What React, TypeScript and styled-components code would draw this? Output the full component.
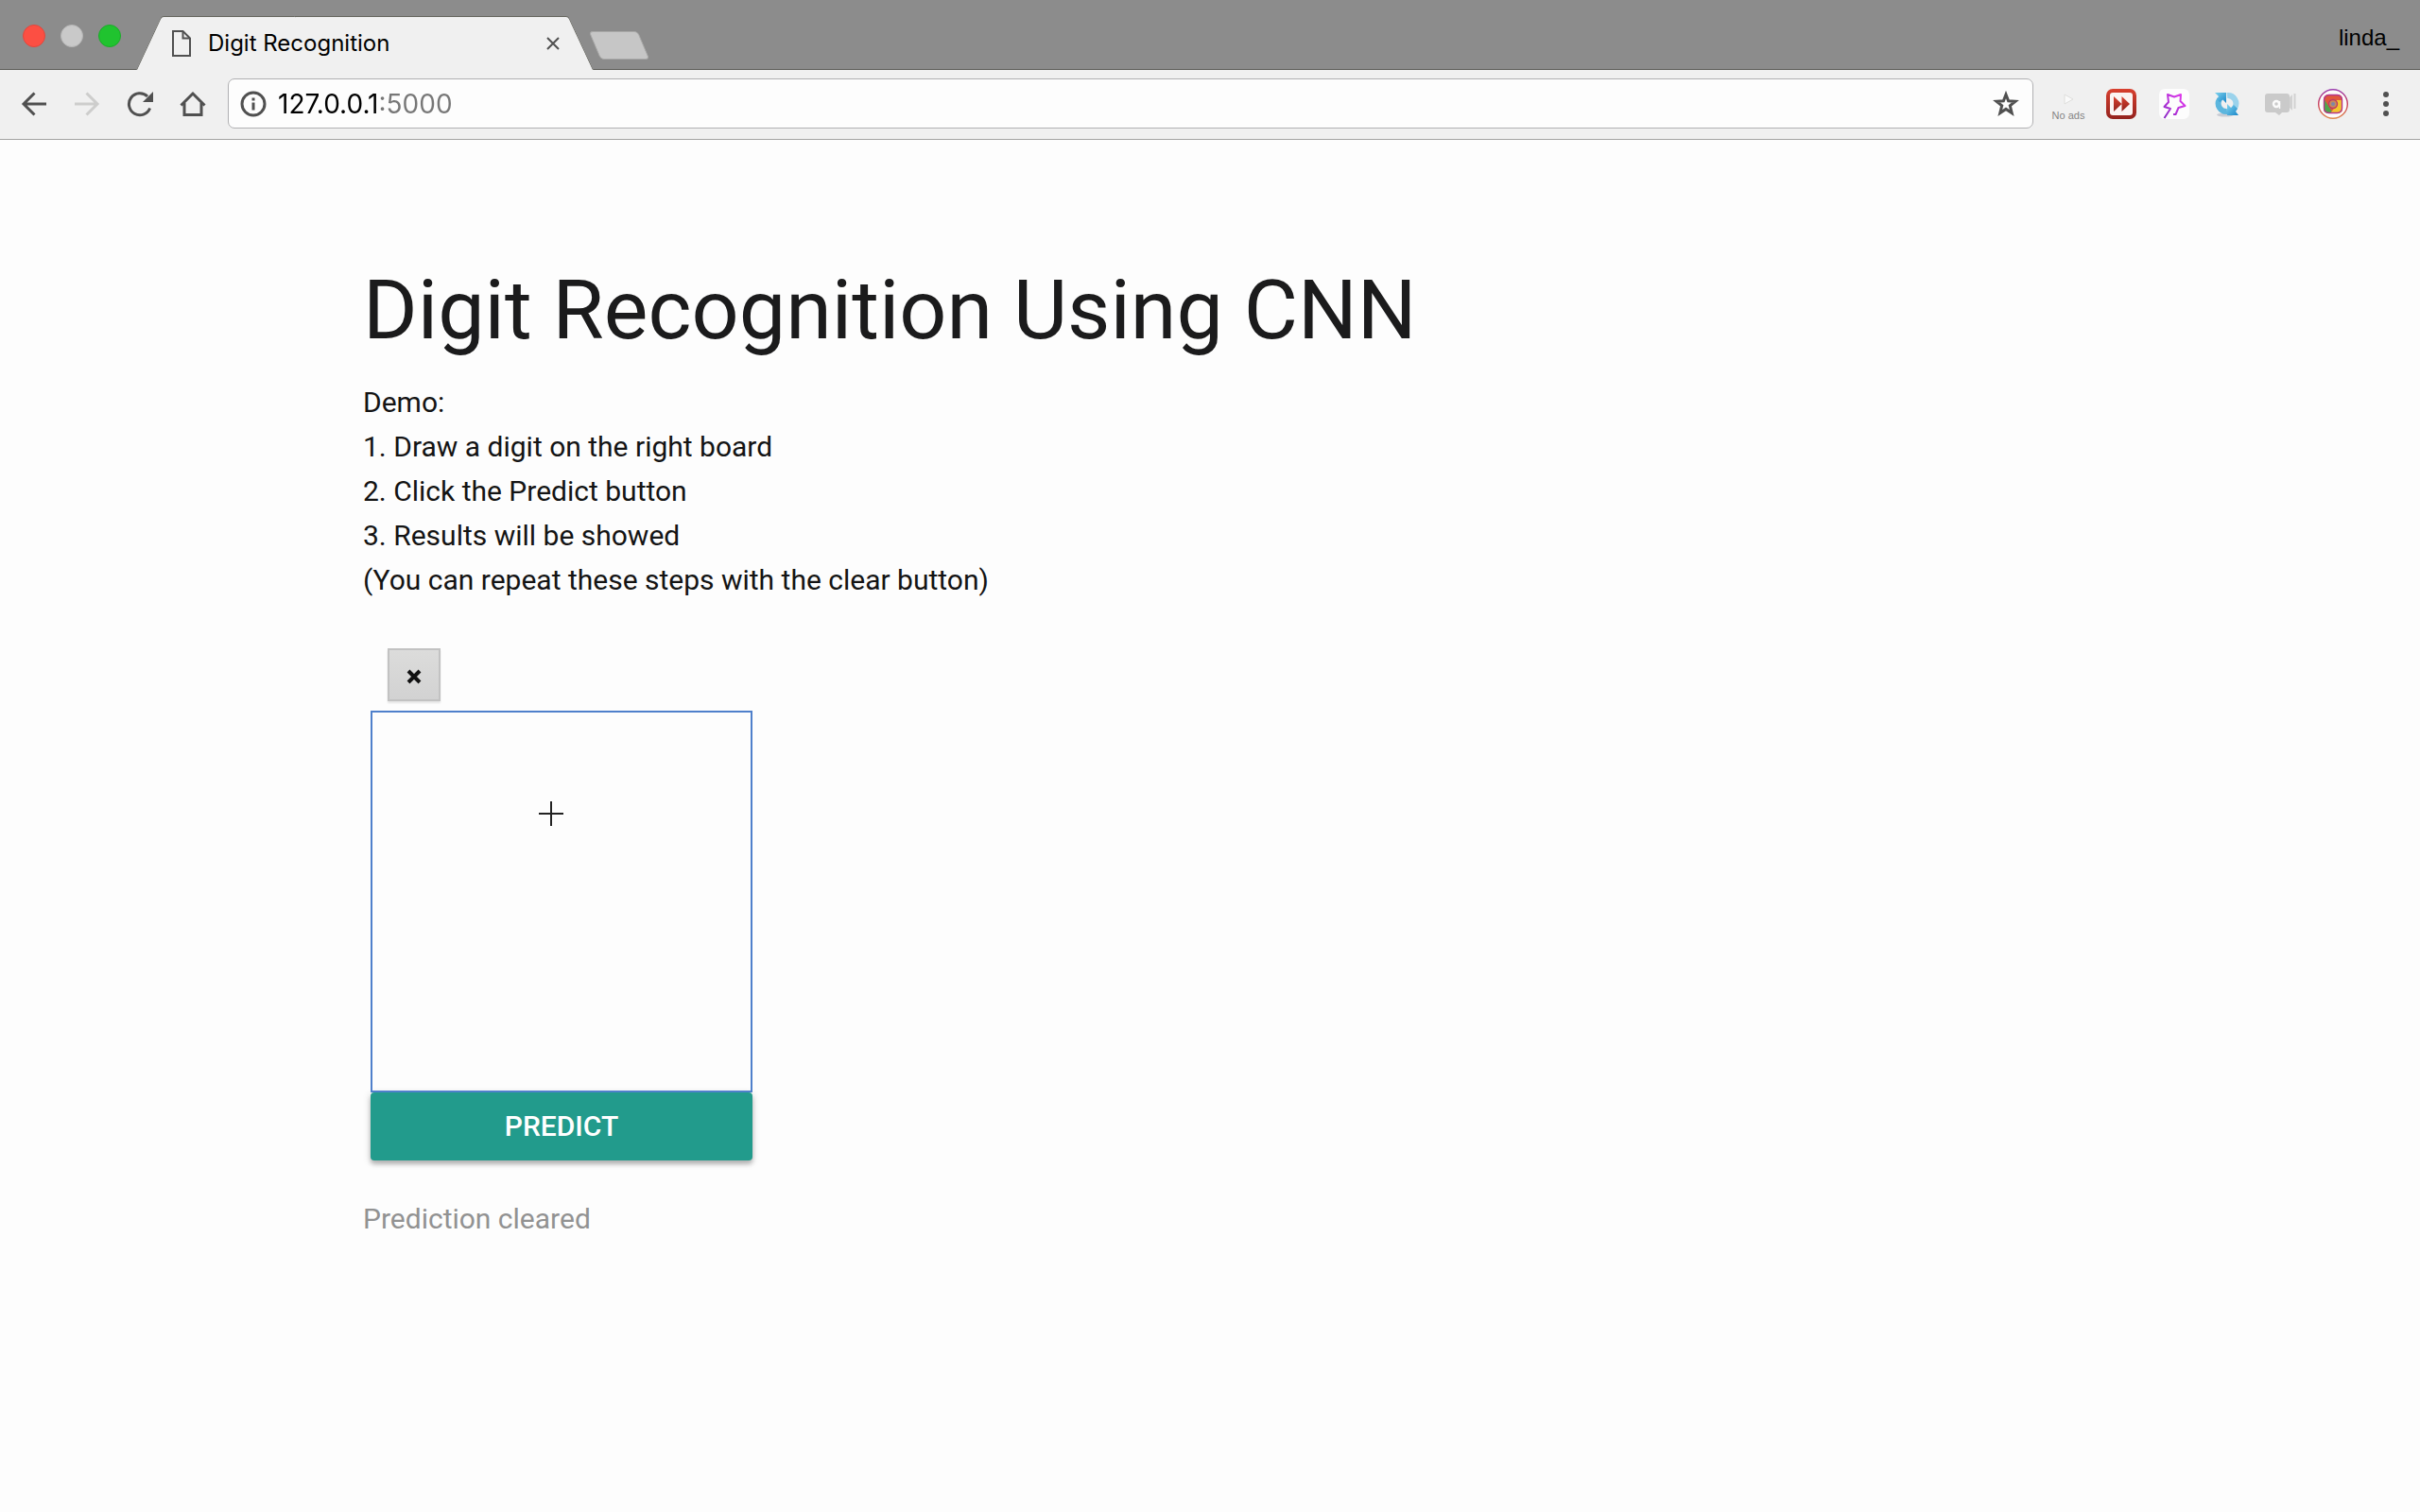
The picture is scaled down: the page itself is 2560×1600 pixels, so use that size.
import React, { useState } from "react";
import styled, { createGlobalStyle } from "styled-components";

const ui = `Inter, "Liberation Sans", sans-serif`;

const GlobalStyle = createGlobalStyle`
  * { box-sizing: border-box; }
  body {
    margin: 0;
    background: #fdfdfd;
    color: #1b1b1c;
    font-family: Roboto, "Liberation Sans", sans-serif;
  }
  button { font: inherit; color: inherit; cursor: pointer; }
`;

const Window = styled.div`
  display: flex;
  flex-direction: column;
  min-height: 100vh;
`;

const TabStrip = styled.header`
  display: flex;
  align-items: flex-start;
  height: 74px;
  padding: 0 22px 0 24px;
  background: #8c8c8c;
  box-shadow: inset 0 -1px #5c5c58;
`;

const Lights = styled.div`
  display: flex;
  gap: 16px;
  margin: 26px 16px 0 0;
`;

const Light = styled.button<{ $color: string; $edge: string }>`
  width: 24px;
  height: 24px;
  padding: 0;
  border: 1px solid ${(p) => p.$edge};
  border-radius: 50%;
  background: ${(p) => p.$color};
`;

const Tab = styled.div`
  position: relative;
  isolation: isolate;
  display: flex;
  align-items: center;
  width: 484px;
  height: 57px;
  margin-top: 17px;
  padding: 0 36px 0 38px;
  font: 24px/28px ${ui};
  color: #000;

  &::before,
  &::after {
    content: "";
    position: absolute;
    z-index: -1;
    inset: 0 40% 0 0;
    background: #f0f0f0;
    border: solid #66665f;
    border-width: 1px 0 0 1px;
    border-radius: 3px 0 0 0;
    transform: skewX(-25deg);
    transform-origin: bottom left;
  }
  &::after {
    inset: 0 0 0 40%;
    border-width: 1px 1px 0 0;
    border-radius: 0 3px 0 0;
    transform: skewX(25deg);
    transform-origin: bottom right;
  }
`;

const TabTitle = styled.span`
  flex: 1;
  margin-left: 18px;
  white-space: nowrap;
`;

const TabClose = styled.button`
  display: flex;
  padding: 0;
  border: 0;
  background: none;
`;

const NewTab = styled.button`
  width: 52px;
  height: 30px;
  margin: 33px 0 0 1px;
  padding: 0;
  border: 1px solid #a9a9a8;
  border-radius: 4px;
  background: #c6c6c6;
  transform: skewX(23deg);
`;

const Profile = styled.span`
  margin: 26px 0 0 auto;
  font: 24px/28px "Liberation Sans", sans-serif;
  color: #000;
`;

const Toolbar = styled.nav`
  display: flex;
  align-items: center;
  height: 74px;
  padding: 9px 8px 11px;
  background: #f0f0f0;
  border-bottom: 1px solid #a3a3a2;
`;

const ToolButton = styled.button`
  display: flex;
  align-items: center;
  justify-content: center;
  width: 56px;
  height: 53px;
  padding: 0;
  border: 0;
  background: none;
`;

const AddressBar = styled.label`
  display: flex;
  flex: 1;
  align-items: center;
  height: 53px;
  margin: 0 9px;
  padding: 0 14px 0 12px;
  background: #fdfdfd;
  border: 1px solid #b0b0b2;
  border-radius: 7px;
`;

/* The host is black and the port grey, split right before the colon. */
const AddressInput = styled.input`
  flex: 1;
  min-width: 0;
  height: 36px;
  margin-left: 12px;
  padding: 0;
  border: 0;
  outline: 0;
  font: 28px/36px ${ui};
  color: #000;
  background: linear-gradient(90deg, #000 108px, #777 108px);
  background-clip: text;
  -webkit-text-fill-color: transparent;
`;

const StarButton = styled.button`
  display: flex;
  padding: 0;
  border: 0;
  background: none;
`;

const NoAds = styled.span`
  display: flex;
  flex-direction: column;
  align-items: center;
  gap: 5px;
  padding-top: 8px;
  font: 11px/12px "Liberation Sans", sans-serif;
  color: #858585;
`;

const Page = styled.main`
  width: 70%;
  margin: 0 auto;
  padding-top: 132px;
`;

const Title = styled.h1`
  margin: 0 0 26px;
  font-size: 88px;
  font-weight: 400;
  line-height: 96px;
`;

const Steps = styled.p`
  margin: 0 0 49px;
  font-size: 30px;
  line-height: 47px;
  color: #141414;
`;

const Workspace = styled.section`
  width: 404px;
  margin-left: 8px;
`;

const ClearButton = styled.button`
  display: flex;
  align-items: center;
  justify-content: center;
  width: 56px;
  height: 56px;
  margin: 0 0 10px 18px;
  padding: 4px 0 0;
  border: 2px solid #c2c2c2;
  background: linear-gradient(#dcdcdb, #d2d2d2);
  box-shadow: 0 2px 2px rgba(0, 0, 0, 0.1);
`;

const Board = styled.div`
  position: relative;
  height: 404px;
  border: 2px solid #4f80cb;
  cursor: crosshair;
`;

const Crosshair = styled.svg`
  position: absolute;
  left: 176px;
  top: 94px;
`;

const PredictButton = styled.button`
  display: block;
  width: 100%;
  height: 72px;
  padding: 0;
  border: 0;
  border-radius: 4px;
  background: #229b8c;
  box-shadow: 0 4px 4px rgba(0, 0, 0, 0.2), 0 2px 8px rgba(0, 0, 0, 0.18);
  && { color: #fff; font-size: 30px; font-weight: 500; line-height: 72px; }
  text-transform: uppercase;
`;

const Status = styled.p`
  margin: 38px 0 0;
  font-size: 30px;
  line-height: 47px;
  color: #929292;
`;

const ink = "#505050";

const FileIcon = () => (
  <svg width="20" height="28" viewBox="0 0 20 28" fill="none" stroke={ink} strokeWidth="2">
    <path d="M1 1H11.5L19 8.5V27H1Z" />
    <path d="M11.5 1V8.5H19" />
  </svg>
);

const CloseIcon = () => (
  <svg width="14" height="14" viewBox="0 0 14 14" stroke={ink} strokeWidth="2">
    <path d="M1 1L13 13M13 1L1 13" />
  </svg>
);

const BackIcon = () => (
  <svg width="28" height="28" viewBox="0 0 28 28" fill="none" stroke={ink} strokeWidth="3">
    <path d="M27 14H3M14.5 2.5L3 14L14.5 25.5" />
  </svg>
);

const ForwardIcon = () => (
  <svg width="28" height="28" viewBox="0 0 28 28" fill="none" stroke="#cdcdcc" strokeWidth="3">
    <path d="M1 14H25M13.5 2.5L25 14L13.5 25.5" />
  </svg>
);

const ReloadIcon = () => (
  <svg width="28" height="28" viewBox="0 0 28 28">
    <path d="M24.6 18.5A11.5 11.5 0 1 1 22 6" fill="none" stroke={ink} strokeWidth="3" />
    <path d="M28 1V12H17Z" fill={ink} />
  </svg>
);

const HomeIcon = () => (
  <svg width="28" height="28" viewBox="0 0 28 28" fill="none" stroke={ink} strokeWidth="3">
    <path d="M1.5 15.5L14 3L26.5 15.5" />
    <path d="M5 13V25.5H23V13" />
  </svg>
);

const InfoIcon = () => (
  <svg width="28" height="28" viewBox="0 0 28 28">
    <circle cx="14" cy="14" r="12" fill="none" stroke={ink} strokeWidth="3" />
    <path d="M12.5 7.5h3v3h-3zM12.5 12.5h3v8h-3z" fill={ink} />
  </svg>
);

const StarIcon = () => (
  <svg width="28" height="28" viewBox="0 0 28 28" fill="none" stroke={ink} strokeWidth="3">
    <path d="M14 4L16.600 10.800L24 11.200L18.300 15.900L20.200 23.500L14 19.400L7.800 23.500L9.700 15.900L4 11.200L11.400 10.800Z" />
  </svg>
);

const PlayIcon = () => (
  <svg width="12" height="12" viewBox="0 0 12 12">
    <path d="M2 1L11 6L2 11Z" fill="#fafafa" stroke="#dededc" />
  </svg>
);

const SkipIcon = () => (
  <svg width="32" height="32" viewBox="0 0 32 32">
    <defs>
      <linearGradient id="skipRed" x1="0" y1="0" x2="0" y2="1">
        <stop offset="0" stopColor="#d8402f" />
        <stop offset="1" stopColor="#93221d" />
      </linearGradient>
    </defs>
    <rect width="32" height="32" rx="7" fill="url(#skipRed)" />
    <rect x="4" y="4" width="24" height="24" rx="3" fill="#fbf4f3" />
    <path d="M8 8L16.5 16L8 24ZM16.5 8L25 16L16.5 24Z" fill="url(#skipRed)" />
  </svg>
);

const WandIcon = () => (
  <svg width="32" height="32" viewBox="0 0 32 32">
    <defs>
      <linearGradient id="wandPink" x1="0" y1="1" x2="1" y2="0">
        <stop offset="0" stopColor="#8a2bc4" />
        <stop offset="1" stopColor="#e83bf0" />
      </linearGradient>
    </defs>
    <rect width="32" height="32" rx="6" fill="#fdfdfd" />
    <path
      d="M5.5 31L12 21L5.500 19L10 14L9 6L16 8.500L23 6L22.5 13L27.5 18L20.5 20L17.5 27H15"
      fill="none"
      stroke="url(#wandPink)"
      strokeWidth="2"
      strokeLinejoin="round"
    />
  </svg>
);

const SyncIcon = () => (
  <svg width="28" height="28" viewBox="0 0 28 28">
    <defs>
      <linearGradient id="syncBlue" x1="0" y1="0" x2="1" y2="1">
        <stop offset="0" stopColor="#7fd3ee" />
        <stop offset="1" stopColor="#1a87c9" />
      </linearGradient>
    </defs>
    <ellipse cx="12" cy="25.5" rx="9" ry="2" fill="#c9ccd4" />
    <path d="M14 22A8.500 8.500 0 0 1 6 9" fill="none" stroke="#5cb6de" strokeWidth="6" />
    <path d="M14 5A8.500 8.500 0 0 1 22 18" fill="none" stroke="#9bd3ec" strokeWidth="6" />
    <path d="M1 2H13V13L9.5 9.5L6 12L3 9L5 6Z" fill="url(#syncBlue)" />
    <path d="M26 26H14V14L18 18L21 15L25 19L23 22Z" fill="url(#syncBlue)" />
  </svg>
);

const CameraIcon = () => (
  <svg width="34" height="28" viewBox="0 0 34 28">
    <path d="M4 3H24Q27 3 27 6V20Q27 23 24 23H19L16 26L12 23H4Q1 23 1 20V6Q1 3 4 3Z" fill="#cacaca" />
    <path d="M27 7L30 4V21L27 18Z" fill="#d2d2d2" />
    <path d="M32.5 3V19" stroke="#d2d2d2" strokeWidth="2" />
    <circle cx="13" cy="14" r="3" fill="none" stroke="#fbfbfb" strokeWidth="2.4" />
    <path d="M16.5 11V19" stroke="#fbfbfb" strokeWidth="1.5" />
  </svg>
);

const InstaIcon = () => (
  <svg width="32" height="32" viewBox="0 0 32 32">
    <defs>
      <linearGradient id="ring" x1="0" y1="0" x2="0" y2="1">
        <stop offset="0" stopColor="#9a3cae" />
        <stop offset="0.5" stopColor="#c8405a" />
        <stop offset="1" stopColor="#e08a50" />
      </linearGradient>
      <clipPath id="tile">
        <rect x="6" y="6" width="20" height="20" rx="5" />
      </clipPath>
    </defs>
    <circle cx="16" cy="16" r="15.3" fill="#fdfbfa" stroke="url(#ring)" strokeWidth="1.4" />
    <g clipPath="url(#tile)">
      <rect x="6" y="6" width="20" height="20" fill="#e0583c" />
      <path d="M6 10L16 26H6Z" fill="#4fa64a" />
      <path d="M18 12H26V26H13L19 18Z" fill="#f4c62f" />
    </g>
    <rect x="6.5" y="6.5" width="19" height="19" rx="5" fill="none" stroke="#b4368c" strokeWidth="1.4" />
    <circle cx="16" cy="16" r="4.5" fill="#c98a5c" stroke="#c03a63" strokeWidth="1.4" />
    <circle cx="16" cy="16" r="2" fill="#7c86a8" />
  </svg>
);

const MenuIcon = () => (
  <svg width="8" height="28" viewBox="0 0 8 28" fill={ink}>
    <circle cx="4" cy="4" r="3" />
    <circle cx="4" cy="14" r="3" />
    <circle cx="4" cy="24" r="3" />
  </svg>
);

const ClearIcon = () => (
  <svg width="16" height="16" viewBox="0 0 16 16" stroke="#111" strokeWidth="4">
    <path d="M2 2L14 14M14 2L2 14" />
  </svg>
);

const navigation = [
  { label: "Back", Icon: BackIcon },
  { label: "Forward", Icon: ForwardIcon },
  { label: "Reload", Icon: ReloadIcon },
  { label: "Home", Icon: HomeIcon },
];

const extensions = [
  { label: "Skip", Icon: SkipIcon },
  { label: "Wand", Icon: WandIcon },
  { label: "Sync", Icon: SyncIcon },
  { label: "Camera", Icon: CameraIcon },
  { label: "Photos", Icon: InstaIcon },
  { label: "Menu", Icon: MenuIcon },
];

export default function App() {
  const [url, setUrl] = useState("127.0.0.1:5000");

  return (
    <Window>
      <GlobalStyle />
      <TabStrip>
        <Lights>
          <Light aria-label="Close window" $color="#fc4f43" $edge="#e2463c" />
          <Light aria-label="Minimize window" $color="#c9c9c9" $edge="#b5b5b5" />
          <Light aria-label="Zoom window" $color="#20c32f" $edge="#1cab2a" />
        </Lights>
        <Tab>
          <FileIcon />
          <TabTitle>Digit Recognition</TabTitle>
          <TabClose aria-label="Close tab">
            <CloseIcon />
          </TabClose>
        </Tab>
        <NewTab aria-label="New tab" />
        <Profile>linda_</Profile>
      </TabStrip>
      <Toolbar>
        {navigation.map(({ label, Icon }) => (
          <ToolButton key={label} aria-label={label}>
            <Icon />
          </ToolButton>
        ))}
        <AddressBar>
          <InfoIcon />
          <AddressInput aria-label="Address" value={url} onChange={(e) => setUrl(e.target.value)} />
          <StarButton aria-label="Bookmark">
            <StarIcon />
          </StarButton>
        </AddressBar>
        <ToolButton>
          <NoAds>
            <PlayIcon />
            No ads
          </NoAds>
        </ToolButton>
        {extensions.map(({ label, Icon }) => (
          <ToolButton key={label} aria-label={label}>
            <Icon />
          </ToolButton>
        ))}
      </Toolbar>
      <Page>
        <Title>Digit Recognition Using CNN</Title>
        <Steps>
          Demo:
          <br />
          1. Draw a digit on the right board
          <br />
          2. Click the Predict button
          <br />
          3. Results will be showed
          <br />
          (You can repeat these steps with the clear button)
        </Steps>
        <Workspace>
          <ClearButton aria-label="Clear">
            <ClearIcon />
          </ClearButton>
          <Board>
            <Crosshair width="26" height="26" viewBox="0 0 26 26" stroke="#222" strokeWidth="2">
              <path d="M13 0V26M0 13H26" />
            </Crosshair>
          </Board>
          <PredictButton>Predict</PredictButton>
        </Workspace>
        <Status>Prediction cleared</Status>
      </Page>
    </Window>
  );
}
